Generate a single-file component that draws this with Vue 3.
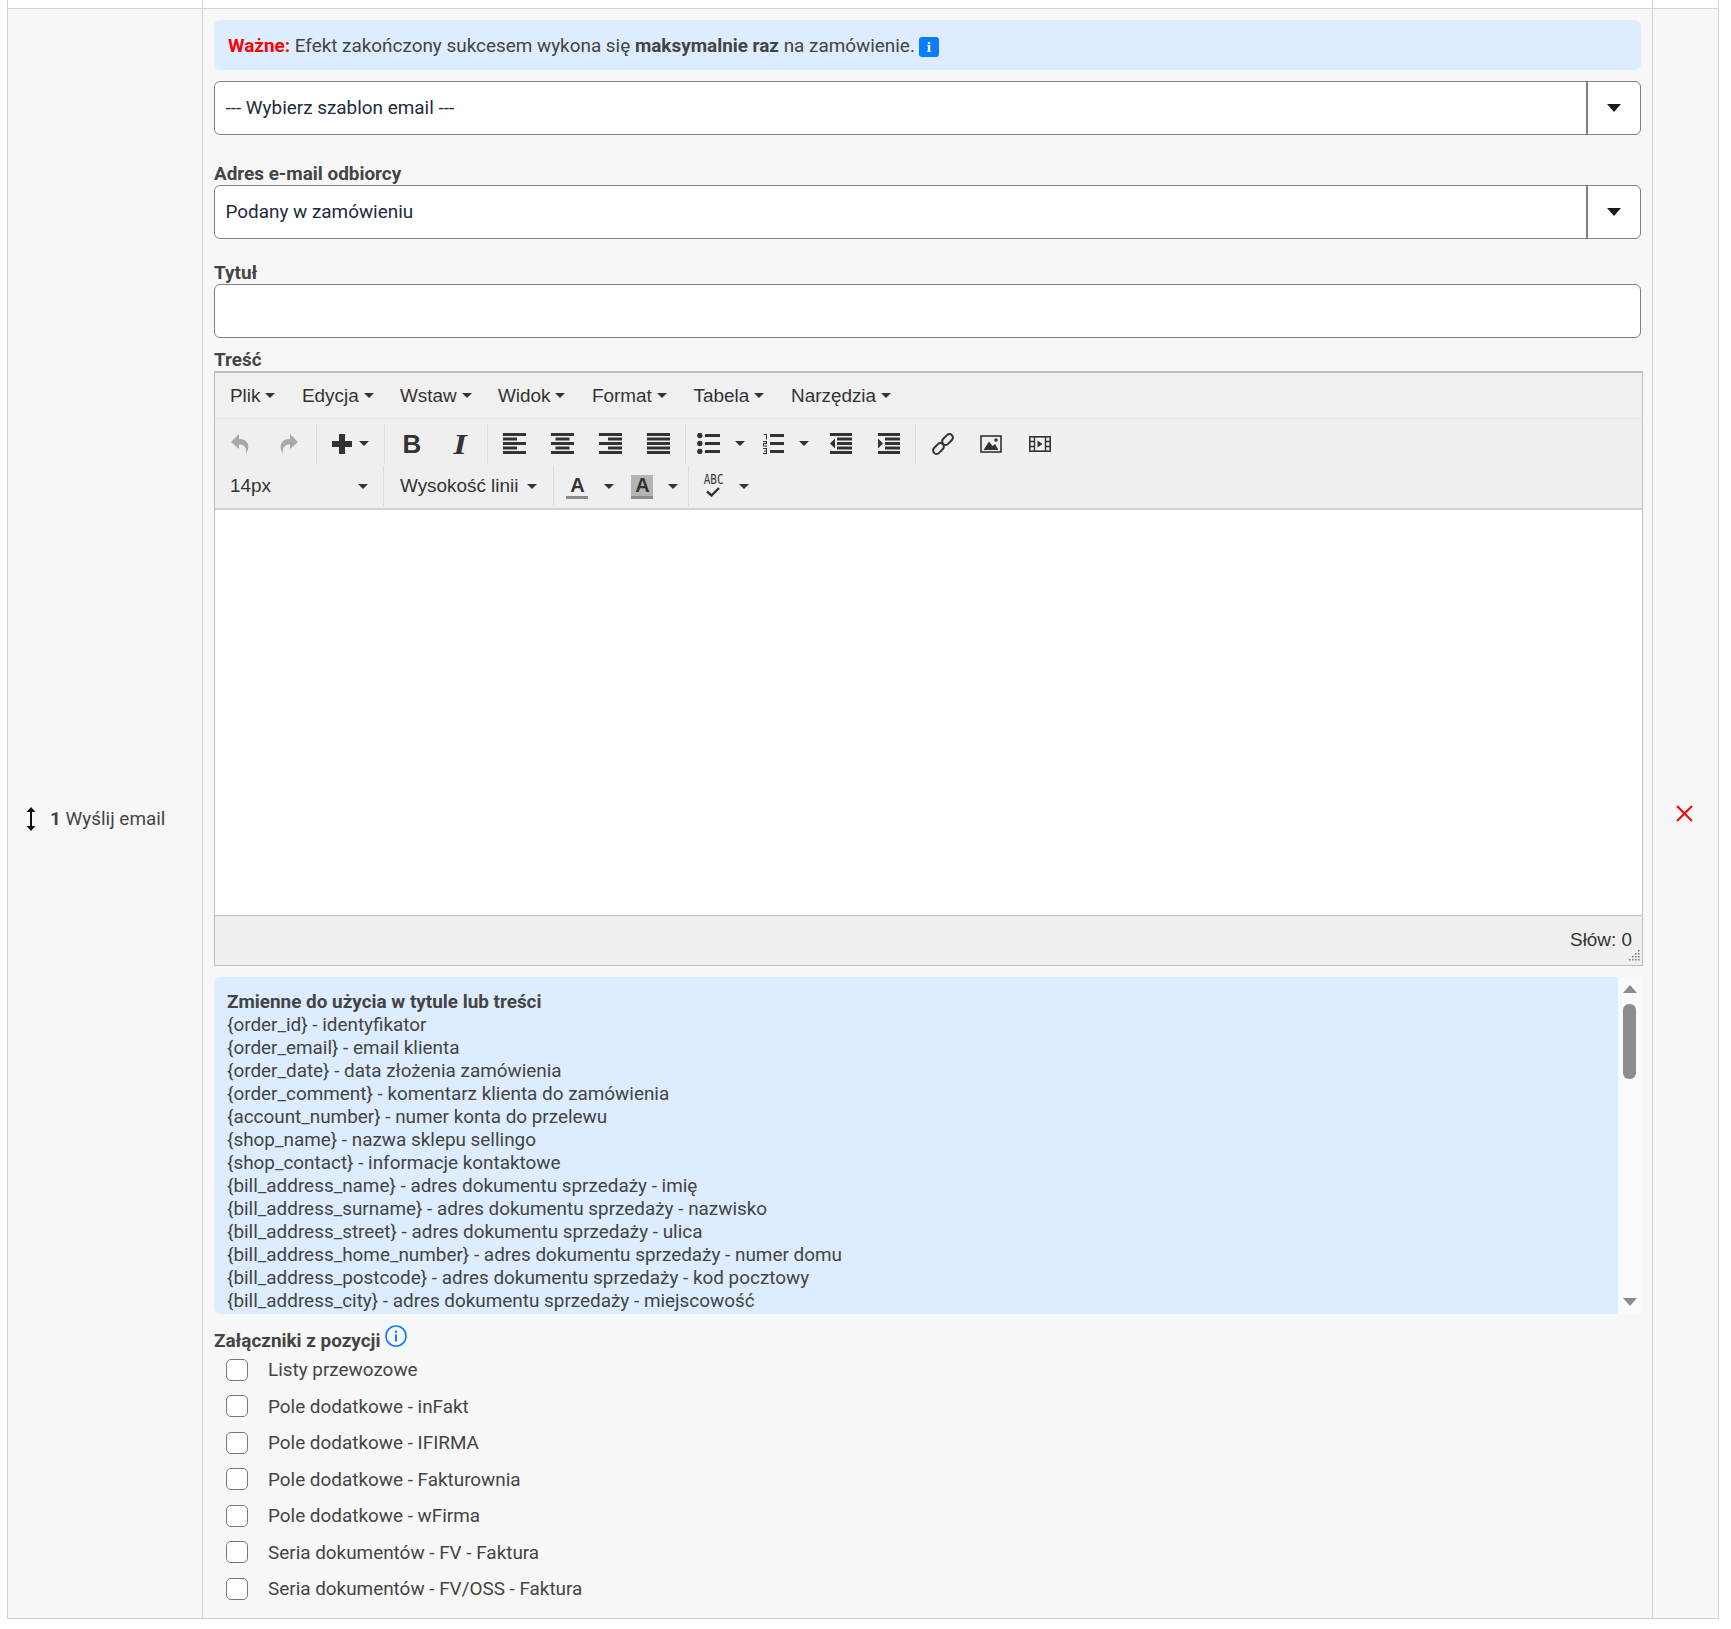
<script setup>
const menus = [
  { t: 'Plik', w: 72 }, { t: 'Edycja', w: 98 }, { t: 'Wstaw', w: 98 }, { t: 'Widok', w: 94 },
  { t: 'Format', w: 101.5 }, { t: 'Tabela', w: 97.5 }, { t: 'Narzędzia', w: 110 }
]
const row1 = [
  { k: 'undo', m: 16 }, { k: 'redo', m: 27 }, { k: 'sep', m: 17.5 },
  { k: 'plus', m: 15.5 }, { k: 'caret', m: 7 }, { k: 'sep', m: 15 },
  { k: 'bold', m: 17 }, { k: 'italic', m: 27.5 }, { k: 'sep', m: 17.5 },
  { k: 'left', m: 15 }, { k: 'center', m: 25 }, { k: 'right', m: 25 }, { k: 'just', m: 24.5 }, { k: 'sep', m: 15 },
  { k: 'bullet', m: 11.5 }, { k: 'caret', m: 15 }, { k: 'num', m: 18 }, { k: 'caret', m: 15 },
  { k: 'outdent', m: 20.5 }, { k: 'indent', m: 24.5 }, { k: 'sep', m: 15 },
  { k: 'link', m: 16 }, { k: 'image', m: 26 }, { k: 'media', m: 26.5 }
]
const bars = {
  left: [[0, 23], [0, 14], [0, 23], [0, 14], [0, 23]],
  center: [[0, 23], [4.5, 14], [0, 23], [4.5, 14], [0, 23]],
  right: [[0, 23], [9, 14], [0, 23], [9, 14], [0, 23]],
  just: [[0, 23], [0, 23], [0, 23], [0, 23], [0, 23]]
}
const vars = [
  '{order_id} - identyfikator',
  '{order_email} - email klienta',
  '{order_date} - data złożenia zamówienia',
  '{order_comment} - komentarz klienta do zamówienia',
  '{account_number} - numer konta do przelewu',
  '{shop_name} - nazwa sklepu sellingo',
  '{shop_contact} - informacje kontaktowe',
  '{bill_address_name} - adres dokumentu sprzedaży - imię',
  '{bill_address_surname} - adres dokumentu sprzedaży - nazwisko',
  '{bill_address_street} - adres dokumentu sprzedaży - ulica',
  '{bill_address_home_number} - adres dokumentu sprzedaży - numer domu',
  '{bill_address_postcode} - adres dokumentu sprzedaży - kod pocztowy',
  '{bill_address_city} - adres dokumentu sprzedaży - miejscowość'
]
const attachments = [
  'Listy przewozowe', 'Pole dodatkowe - inFakt', 'Pole dodatkowe - IFIRMA', 'Pole dodatkowe - Fakturownia',
  'Pole dodatkowe - wFirma', 'Seria dokumentów - FV - Faktura', 'Seria dokumentów - FV/OSS - Faktura'
]
const grip = [[11,1],[11,4],[8,4],[11,7],[8,7],[5,7],[11,10],[8,10],[5,10],[2,10]]
</script>

<template>
  <div class="page">
    <div class="table">
      <div class="strip"><div></div><div></div><div></div></div>
      <div class="row">
        <div class="c-name">
          <svg class="move" viewBox="0 0 12 24" width="12" height="24">
            <path d="M6 0 L10.5 5 H7 V19 H10.5 L6 24 L1.5 19 H5 V5 H1.5 Z" fill="#111" />
          </svg>
          <span class="name"><b>1</b> Wyślij email</span>
        </div>

        <div class="c-main">
          <div class="alert">
            <span><b class="red">Ważne:</b> Efekt zakończony sukcesem wykona się <b>maksymalnie raz</b> na zamówienie.</span>
            <span class="badge">i</span>
          </div>

          <div class="select first">
            <span class="val">--- Wybierz szablon email ---</span>
            <span class="arrow"><i class="sel-caret"></i></span>
          </div>

          <label class="lab lab-adres">Adres e-mail odbiorcy</label>
          <div class="select">
            <span class="val">Podany w zamówieniu</span>
            <span class="arrow"><i class="sel-caret"></i></span>
          </div>

          <label class="lab lab-tytul">Tytuł</label>
          <div class="input"></div>

          <label class="lab lab-tresc">Treść</label>
          <div class="editor">
            <div class="menubar">
              <span v-for="m in menus" :key="m.t" class="menu" :style="{ width: m.w + 'px' }">{{ m.t }}<i class="caret"></i></span>
            </div>
            <div class="toolbar">
              <div class="tb-row">
                <template v-for="(it, i) in row1" :key="i">
                  <span v-if="it.k === 'sep'" class="sep" :style="{ marginLeft: it.m + 'px' }"></span>
                  <i v-else-if="it.k === 'caret'" class="caret tb-caret" :style="{ marginLeft: it.m + 'px' }"></i>
                  <span v-else class="ic" :class="'ic-' + it.k" :style="{ marginLeft: it.m + 'px' }">
                    <svg v-if="it.k === 'undo'" viewBox="0 0 20 20" width="20" height="20"><path d="M8 0 L0 8 L8 15 V10.5 C13 10.5 16 13 15 20 C19.500 13 18 5 8 5 Z" fill="#a9a9a9" /></svg>
                    <svg v-else-if="it.k === 'redo'" viewBox="0 0 20 20" width="20" height="20"><path d="M12 0 L20 8 L12 15 V10.5 C7 10.500 4 13 5 20 C.5 13 2 5 12 5 Z" fill="#a9a9a9" /></svg>
                    <svg v-else-if="it.k === 'plus'" viewBox="0 0 20 20" width="20" height="20"><path d="M7 0 H13 V7 H20 V13 H13 V20 H7 V13 H0 V7 H7 Z" fill="#333" /></svg>
                    <span v-else-if="it.k === 'bold'" class="g-bold">B</span>
                    <span v-else-if="it.k === 'italic'" class="g-italic">I</span>
                    <svg v-else-if="bars[it.k]" viewBox="0 0 23 21" width="23" height="21">
                      <rect v-for="(b, n) in bars[it.k]" :key="n" :x="b[0]" :y="n * 4.5" :width="b[1]" height="3" fill="#333" />
                    </svg>
                    <svg v-else-if="it.k === 'bullet'" viewBox="0 0 23 21" width="23" height="21" fill="#333">
                      <circle cx="2.800" cy="2.500" r="2.700" /><circle cx="2.800" cy="10.500" r="2.700" /><circle cx="2.800" cy="18.500" r="2.700" />
                      <rect x="8" y="1" width="15" height="3" /><rect x="8" y="9" width="15" height="3" /><rect x="8" y="17" width="15" height="3" />
                    </svg>
                    <svg v-else-if="it.k === 'num'" viewBox="0 0 21 21" width="21" height="21" fill="#333">
                      <path d="M1 1 H4 V6.500 H3 V2 H1 Z M0 8 H4 V11 H1 V12.500 H4 V13.500 H0 V10 H3 V9 H0 Z M0 15 H4 V21 H0 V20 H3 V18.500 H1 V17.500 H3 V16 H0 Z" />
                      <rect x="7" y="1" width="14" height="3" /><rect x="7" y="9" width="14" height="3" /><rect x="7" y="17" width="14" height="3" />
                    </svg>
                    <svg v-else-if="it.k === 'outdent'" viewBox="0 0 23 21" width="23" height="21" fill="#333">
                      <rect x="0" y="0" width="22" height="3" /><rect x="7" y="4.500" width="15" height="3" /><rect x="7" y="9" width="15" height="3" /><rect x="7" y="13.500" width="15" height="3" /><rect x="0" y="18" width="22" height="3" />
                      <path d="M5 5.500 V15.500 L0 10.500 Z" />
                    </svg>
                    <svg v-else-if="it.k === 'indent'" viewBox="0 0 23 21" width="23" height="21" fill="#333">
                      <rect x="1" y="0" width="22" height="3" /><rect x="8" y="4.500" width="15" height="3" /><rect x="8" y="9" width="15" height="3" /><rect x="8" y="13.500" width="15" height="3" /><rect x="1" y="18" width="22" height="3" />
                      <path d="M1 5.500 V15.500 L6 10.500 Z" />
                    </svg>
                    <svg v-else-if="it.k === 'link'" viewBox="0 0 22 22" width="22" height="22" fill="none" stroke="#333" stroke-width="2">
                      <rect x="-6.200" y="-3.500" width="12.400" height="7" rx="3.500" transform="translate(6.500 15.500) rotate(-45)" />
                      <rect x="-6.200" y="-3.500" width="12.400" height="7" rx="3.500" transform="translate(15.500 6.500) rotate(-45)" />
                    </svg>
                    <svg v-else-if="it.k === 'image'" viewBox="0 0 22 18" width="22" height="18">
                      <rect x="1" y="1" width="20" height="16" fill="none" stroke="#333" stroke-width="1.600" />
                      <path d="M3.500 15 L9 6.500 L12.500 11 L15 9 L18.500 15 Z" fill="#333" /><circle cx="16" cy="5" r="1.800" fill="#333" />
                    </svg>
                    <svg v-else-if="it.k === 'media'" viewBox="0 0 22 16" width="22" height="16">
                      <rect x=".8" y=".8" width="20.400" height="14.400" fill="none" stroke="#333" stroke-width="1.600" />
                      <path d="M5.500 0 V16 M16.500 0 V16 M0 5.500 H5.500 M0 10.500 H5.500 M16.500 5.500 H22 M16.500 10.500 H22" stroke="#333" stroke-width="1.400" fill="none" />
                      <path d="M8.500 4.500 L13.500 8 L8.500 11.500 Z" fill="#333" />
                    </svg>
                  </span>
                </template>
              </div>
              <div class="tb-row tb-row2">
                <span class="tb-text fs">14px</span><i class="caret caret-fs"></i>
                <span class="sep sep-a"></span>
                <span class="tb-text lh">Wysokość linii</span><i class="caret caret-lh"></i>
                <span class="sep sep-b"></span>
                <span class="a-btn"><span class="a-fore">A</span></span><i class="caret caret-a"></i>
                <span class="a-btn a-bg"><span class="a-fore">A</span></span><i class="caret caret-b"></i>
                <span class="sep sep-c"></span>
                <span class="spell">
                  <span class="abc">ABC</span>
                  <svg viewBox="0 0 14 10" width="14" height="10"><path d="M1 4.500 L5.500 8.500 L13 1" fill="none" stroke="#333" stroke-width="2.400" /></svg>
                </span>
                <i class="caret caret-c"></i>
              </div>
            </div>
            <div class="area"></div>
            <div class="status">
              <span>Słów: 0</span>
              <svg class="grip" viewBox="0 0 13 13" width="13" height="13" fill="#777">
                <rect v-for="(p, i) in grip" :key="i" :x="p[0]" :y="p[1]" width="1.500" height="1.500" />
              </svg>
            </div>
          </div>

          <div class="vars-wrap">
            <div class="vars">
              <b>Zmienne do użycia w tytule lub treści</b>
              <div v-for="v in vars" :key="v">{{ v }}</div>
            </div>
            <div class="sbar">
              <i class="sb-up"></i>
              <i class="sb-thumb"></i>
              <i class="sb-down"></i>
            </div>
          </div>

          <div class="att-head">
            <label class="lab">Załączniki z pozycji</label>
            <svg class="info" viewBox="0 0 22 22" width="22" height="22">
              <circle cx="11" cy="11" r="10" fill="none" stroke="#0d7bf2" stroke-width="1.600" />
              <circle cx="11" cy="6.800" r="1.200" fill="#0d7bf2" />
              <rect x="10" y="9.500" width="2" height="7" fill="#0d7bf2" />
            </svg>
          </div>
          <div class="atts">
            <div v-for="a in attachments" :key="a" class="att"><i class="box"></i><span>{{ a }}</span></div>
          </div>
        </div>

        <div class="c-del">
          <svg viewBox="0 0 17 17" width="17" height="17">
            <path d="M1 1 L16 16 M16 1 L1 16" stroke="#fb0007" stroke-width="2" fill="none" />
          </svg>
        </div>
      </div>
    </div>
  </div>
</template>

<style>
html, body { margin: 0; background: #fff; }
</style>

<style scoped>
.page { width: 1731px; height: 1629px; overflow: hidden; font-family: Roboto, "Noto Sans", sans-serif; font-size: 18.900px; color: #444; box-sizing: border-box; padding-left: 7px; }
.table { width: 1712px; }
.strip { display: grid; grid-template-columns: 195px 1450px 67px; height: 8px; box-sizing: content-box; border-bottom: 1px solid #d3d3d3; }
.strip > div { border-left: 1px solid #d3d3d3; }
.strip > div:last-child { border-right: 1px solid #d3d3d3; }
.row { display: grid; grid-template-columns: 195px 1450px 67px; height: 1609px; background: #f7f7f7; border-bottom: 1px solid #d3d3d3; box-sizing: content-box; }
.c-name, .c-main, .c-del { border-left: 1px solid #d3d3d3; box-sizing: border-box; }
.c-del { border-right: 1px solid #d3d3d3; display: flex; justify-content: center; align-items: flex-start; padding: 796px 2px 0 0; }
.c-name { display: flex; align-items: flex-start; padding: 796px 0 0 17px; }
.move { margin-top: 2px; flex: none; }
.name { margin-left: 13px; margin-top: 2px; line-height: 24px; }
.c-main { padding: 11px 10px 0 11px; }
.alert { height: 50px; background: #ddecfe; border-radius: 6px; padding: 2px 0 0 14px; display: flex; align-items: center; white-space: pre-wrap; box-sizing: border-box; width: 1427px; line-height: 24px; }
.alert b { font-weight: 700; }
.red { color: #f00; }
.badge { display: inline-flex; align-items: center; justify-content: center; width: 20px; height: 20px; background: #0b7bff; color: #fff; border-radius: 3px; font-size: 15px; font-family: "Liberation Serif", serif; font-weight: 700; margin-left: 4px; margin-top: 1px; }
.select { display: flex; width: 1427px; height: 54px; box-sizing: border-box; border: 1.500px solid #808080; border-radius: 6px; background: #fff; color: #212b3c; }
.first { margin-top: 11px; }
.val { flex: 1; padding-left: 10.500px; line-height: 51px; }
.arrow { width: 54px; border-left: 2px solid #808080; display: flex; align-items: center; justify-content: center; box-sizing: border-box; padding-right: 0; }
.sel-caret { width: 0; height: 0; border-style: solid; border-width: 8px 7.500px 0; border-color: #1a1a1a transparent transparent; }
.lab { display: block; font-weight: 700; line-height: 24px; color: #444; }
.lab-adres { margin: 27px 0 -1px; }
.lab-tytul { margin: 22px 0 -1px; }
.lab-tresc { margin: 10px 0 -1px; height: 24px; }
.input { width: 1427px; height: 54px; box-sizing: border-box; border: 1.500px solid #808080; border-radius: 6px; background: #fff; }
.editor { width: 1429px; height: 595px; box-sizing: border-box; border: 1px solid #bfbfbf; border-top-width: 2px; margin-top: 0; display: flex; flex-direction: column; font-family: "Liberation Sans", Arial, sans-serif; color: #333; }
.menubar { height: 46px; background: #f0f0f0; border-bottom: 1px solid #e4e4e4; display: flex; align-items: center; padding-left: 15px; flex: none; box-sizing: border-box; }
.menu { flex: none; display: inline-flex; align-items: center; font-size: 18.900px; }
.caret { display: inline-block; width: 0; height: 0; border-style: solid; border-width: 5px 5px 0; border-color: #333 transparent transparent; flex: none; }
.menu .caret { margin-left: 5px; }
.toolbar { height: 91px; background: #efefef; border-bottom: 2px solid #d0d0d0; flex: none; box-sizing: border-box; padding-top: 4px; }
.tb-row { display: flex; align-items: center; height: 41px; padding-left: 0; }
.tb-row2 { height: 42px; padding-top: 2px; box-sizing: border-box; }
.sep { width: 1px; height: 40px; background: #dcdcdc; flex: none; }
.ic { display: inline-flex; align-items: center; justify-content: center; flex: none; height: 24px; }
.g-bold { width: 20px; text-align: center; font: 700 26px/24px "Liberation Sans", sans-serif; color: #333; }
.g-italic { display: inline-block; width: 20px; text-align: center; font: italic 700 29px/24px "Liberation Serif", serif; color: #333; transform: scaleX(1.2); }
.tb-text { font-size: 18.900px; flex: none; }
.fs { margin-left: 15px; }
.caret-fs { margin-left: 87px; }
.sep-a { margin-left: 15px; }
.lh { margin-left: 16px; }
.caret-lh { margin-left: 9px; }
.sep-b { margin-left: 15.500px; }
.a-btn { width: 22px; height: 24px; display: flex; justify-content: center; align-items: flex-start; border-bottom: 3px solid #8a8a8a; flex: none; box-sizing: border-box; margin-left: 12.500px; margin-top: 1px; }
.a-fore { font: 700 20px/20px "Liberation Sans", sans-serif; color: #333; }
.a-bg { background: #b4b4b4; margin-left: 17px; }
.caret-a { margin-left: 16px; }
.caret-b { margin-left: 15px; }
.sep-c { margin-left: 10px; }
.spell { margin-left: 13px; width: 22px; height: 28px; display: flex; flex-direction: column; align-items: center; flex: none; }
.abc { font: 14px/15px "DejaVu Sans Mono", monospace; color: #333; transform: scaleX(.78); letter-spacing: 0; }
.caret-c { margin-left: 15px; }
.area { flex: 1; background: #fff; }
.status { height: 50px; flex: none; background: #efefef; border-top: 1px solid #bfbfbf; position: relative; display: flex; justify-content: flex-end; align-items: center; padding: 0 10px 2px 0; font-size: 18.900px; box-sizing: border-box; }
.grip { position: absolute; right: 2px; bottom: 3px; }
.vars-wrap { display: flex; width: 1427px; height: 337px; margin-top: 11px; }
.vars { width: 1404px; box-sizing: border-box; background: #ddecfe; border-radius: 6px 0 0 6px; padding: 13px 13px 0; line-height: 23px; overflow: hidden; }
.vars b { display: block; font-weight: 700; }
.sbar { width: 23px; background: #fafafa; position: relative; display: flex; flex-direction: column; align-items: center; }
.sb-up { width: 0; height: 0; border-style: solid; border-width: 0 7.500px 8px; border-color: transparent transparent #8c8c8c; margin-top: 8px; }
.sb-thumb { width: 13px; height: 75px; background: #8c8c8c; border-radius: 6px; margin-top: 11px; }
.sb-down { width: 0; height: 0; border-style: solid; border-width: 8px 7.500px 0; border-color: #8c8c8c transparent transparent; margin-top: auto; margin-bottom: 8px; }
.att-head { display: flex; align-items: flex-start; margin-top: 15px; height: 22.300px; }
.att-head .lab { line-height: 24px; margin-top: 0; }
.info { margin: -4px 0 0 4px; }
.atts { padding-left: 12px; margin-top: 0; }
.att { display: flex; align-items: center; height: 36.500px; }
.box { width: 22px; height: 22px; box-sizing: border-box; border: 1.500px solid #777; border-radius: 5px; background: #fff; margin-right: 20px; flex: none; }
</style>
